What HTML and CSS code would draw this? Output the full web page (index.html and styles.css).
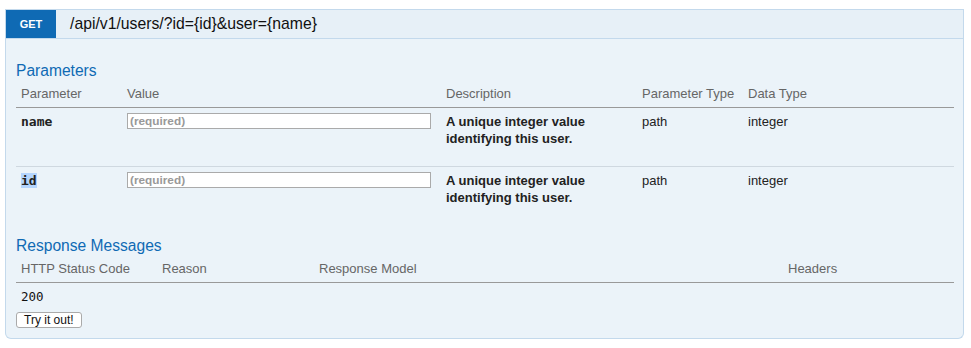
FILE: index.html
```html
<!DOCTYPE html>
<html lang="en">
<head>
    <meta charset="UTF-8">
    <title>Swagger Operation</title>
    <link rel="stylesheet" href="styles.css">
</head>
<body>

    <div class="operation">
        <div class="heading">
            <span class="method">GET</span>
            <span class="path">/api/v1/users/?id={id}&amp;user={name}</span>
        </div>

        <div class="content">
            <h4>Parameters</h4>
            <table class="params">
                <colgroup>
                    <col style="width:106px">
                    <col style="width:319px">
                    <col style="width:196px">
                    <col style="width:106px">
                    <col>
                </colgroup>
                <thead>
                    <tr>
                        <th>Parameter</th>
                        <th>Value</th>
                        <th>Description</th>
                        <th>Parameter Type</th>
                        <th>Data Type</th>
                    </tr>
                </thead>
                <tbody>
                    <tr>
                        <td class="code">name</td>
                        <td><input type="text" placeholder="(required)"></td>
                        <td class="desc">A unique integer value identifying this user.</td>
                        <td>path</td>
                        <td>integer</td>
                    </tr>
                    <tr class="last">
                        <td class="code"><span class="selected">id</span></td>
                        <td><input type="text" placeholder="(required)"></td>
                        <td class="desc">A unique integer value identifying this user.</td>
                        <td>path</td>
                        <td>integer</td>
                    </tr>
                </tbody>
            </table>

            <h4>Response Messages</h4>
            <table class="responses">
                <colgroup>
                    <col style="width:141px">
                    <col style="width:157px">
                    <col style="width:469px">
                    <col>
                </colgroup>
                <thead>
                    <tr>
                        <th>HTTP Status Code</th>
                        <th>Reason</th>
                        <th>Response Model</th>
                        <th>Headers</th>
                    </tr>
                </thead>
                <tbody>
                    <tr>
                        <td class="status">200</td>
                        <td></td>
                        <td></td>
                        <td></td>
                    </tr>
                </tbody>
            </table>

            <button type="button" class="try">Try it out!</button>
        </div>
    </div>

</body>
</html>
```

FILE: styles.css
```css
body {
    margin: 0;
    background: white;
    font-family: "Liberation Sans", Arial, sans-serif;
    color: #333;
}

.operation {
    margin: 9px 7px 0 5px;
}

.heading {
    display: flex;
    align-items: center;
    height: 28px;
    background: #e7f0f7;
    border: 1px solid #c3d9ec;
}

.method {
    width: 50px;
    height: 28px;
    line-height: 29px;
    text-align: center;
    background: #0f6ab4;
    color: white;
    font-size: 11px;
    font-weight: bold;
}

.path {
    margin-left: 14px;
    font-size: 15.75px;
    color: #111;
}

.content {
    background: #ebf3f9;
    border: 1px solid #c3d9ec;
    border-top: none;
    border-radius: 0 0 6px 6px;
    padding: 23px 9px 10px 10px;
}

h4 {
    margin: 0;
    font-size: 15.6px;
    font-weight: normal;
    line-height: 18px;
    color: #0f6ab4;
}

table {
    width: 100%;
    table-layout: fixed;
    border-collapse: collapse;
}

th {
    padding: 5px 5px;
    line-height: 17px;
    font-size: 13px;
    font-weight: normal;
    text-align: left;
    color: #666;
    border-bottom: 1px solid #999;
}

.params {
    margin-bottom: 12px;
}

.params td {
    padding: 5px 5px 19px;
    vertical-align: top;
    line-height: 17px;
    font-size: 13px;
    color: #222;
    border-bottom: 1px solid #cfd8e0;
}

.params tr.last td {
    border-bottom: none;
}

.code {
    font-family: "DejaVu Sans Mono", monospace;
    font-weight: bold;
    font-size: 12.5px;
    color: #111;
}

.selected {
    background: #b4d5fe;
}

.desc {
    font-weight: bold;
    color: #333;
}

input {
    display: block;
    box-sizing: border-box;
    width: 304px;
    height: 16px;
    margin: 0;
    padding: 0 2px;
    border: 1px solid #aaa;
    background: white;
    font-family: "Liberation Sans", Arial, sans-serif;
    font-size: 11.8px;
}

input::placeholder {
    color: #999;
    font-weight: bold;
}

.responses td {
    padding: 5px 5px;
    line-height: 17px;
}

.status {
    font-family: "DejaVu Sans Mono", monospace;
    font-size: 12.5px;
    color: #111;
}

.try {
    display: block;
    margin-top: 2px;
    height: 16px;
    padding: 0 7px;
    background: white;
    border: 1px solid #aaa;
    border-radius: 3px;
    font-family: "Liberation Sans", Arial, sans-serif;
    font-size: 12px;
    line-height: 14px;
    color: #111;
}
```
